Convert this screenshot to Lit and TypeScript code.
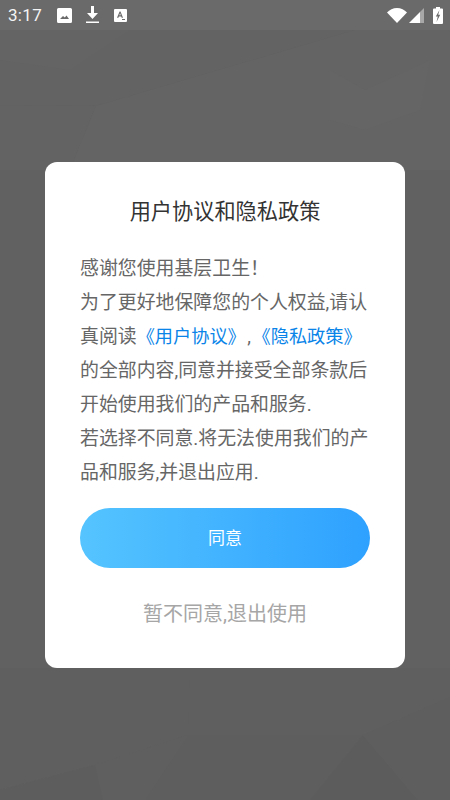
import { LitElement, html, css, svg } from "lit";
import { customElement } from "lit/decorators.js";

const facets = [
  ["M0 105 L96 106 L355 30 L0 30Z", "#636363"],
  ["M0 30 L130 30 L70 70 L0 60Z", "#646464"],
  ["M96 106 L70 170 L0 170 L0 105Z", "#636363"],
  ["M96 106 L355 30 L450 30 L450 170 L70 170Z", "#646464"],
  ["M330 70 L365 90 L430 60 L420 110 L365 130 L330 120Z", "#656565"],
  ["M0 668 L190 668 L188 735 L95 765 L0 790Z", "#5f5f5f"],
  ["M190 668 L188 735 L363 735 L450 697 L450 668Z", "#5f5f5f"],
  ["M188 735 L145 800 L310 800 L363 735Z", "#5e5e5e"],
  ["M363 735 L310 800 L418 800Z", "#5c5c5c"],
  ["M363 735 L450 697 L450 800 L418 800Z", "#5e5e5e"],
  ["M95 765 L188 735 L145 800 L103 800Z", "#5f5f5f"],
  ["M0 790 L95 765 L103 800 L0 800Z", "#5d5d5d"],
];

@customElement("app-root")
export class AppRoot extends LitElement {
  static styles = css`
    :host {
      display: block;
      width: 450px;
      height: 800px;
      overflow: hidden;
      font-family: Roboto, "Noto Sans CJK SC", sans-serif;
    }
    .screen {
      position: relative;
      width: 450px;
      height: 800px;
      display: flex;
      flex-direction: column;
      background: #616161;
    }
    .facets {
      position: absolute;
      inset: 0;
      width: 450px;
      height: 800px;
    }
    .status {
      position: relative;
      height: 30px;
      flex: none;
      display: flex;
      align-items: center;
      padding: 0 7px 0 8px;
      background: #6a6a6a;
      color: #f4f4f4;
    }
    .time {
      font-size: 17px;
      letter-spacing: 0.3px;
      width: 49px;
    }
    .status svg {
      display: block;
      flex: none;
      fill: #fff;
    }
    .spacer {
      flex: 1;
    }
    .main {
      position: relative;
      flex: 1;
      padding: 132px 45px 0;
    }
    .card {
      height: 506px;
      box-sizing: border-box;
      background: #fff;
      border-radius: 12px;
      padding: 35px 35px 0;
      display: flex;
      flex-direction: column;
      align-items: center;
    }
    .title {
      font-size: 21.2px;
      line-height: 30px;
      color: #333;
      white-space: nowrap;
    }
    .body {
      align-self: stretch;
      margin-top: 25px;
      font-size: 18.9px;
      line-height: 34px;
      color: #666;
      white-space: nowrap;
    }
    .link {
      color: #0a84e8;
      font-size: 18.2px;
    }
    .sep {
      margin: 0 1.5px;
    }
    .agree {
      all: unset;
      box-sizing: border-box;
      margin-top: 18px;
      width: 290px;
      height: 60px;
      flex: none;
      padding-bottom: 3px;
      border-radius: 30px;
      background: linear-gradient(90deg, #55c4ff, #2ea1ff);
      color: #fff;
      font-size: 17px;
      text-align: center;
    }
    .decline {
      margin-top: 31px;
      font-size: 20px;
      line-height: 30px;
      color: #a6a6a6;
      white-space: nowrap;
    }
  `;

  render() {
    return html`
      <div class="screen">
        <svg class="facets" viewBox="0 0 450 800">
          ${facets.map(([d, c]) => svg`<path d=${d} fill=${c}></path>`)}
        </svg>
        <div class="status">
          <span class="time">3:17</span>
          <svg width="15" height="15" viewBox="0 0 15 15">
            <path fill-rule="evenodd" d="M1.500 0h12A1.500 1.500 0 0 1 15 1.500v12a1.500 1.500 0 0 1-1.500 1.500h-12A1.500 1.500 0 0 1 0 13.500v-12A1.500 1.500 0 0 1 1.500 0ZM3 11h9L9.500 7.500 7.800 9.500 6 8Z"></path>
          </svg>
          <svg style="margin-left:14px" width="13" height="18" viewBox="0 0 13 18">
            <path d="M5 0h3v7h4l-5.500 6L1 7h4ZM0 15.500h13V17H0Z"></path>
          </svg>
          <svg style="margin-left:15px" width="13" height="13" viewBox="0 0 13 13">
            <path fill-rule="evenodd" d="M1 0h11a1 1 0 0 1 1 1v11a1 1 0 0 1-1 1H1a1 1 0 0 1-1-1V1a1 1 0 0 1 1-1ZM5.600 2.500 3 8.800h1.400l.5-1.300h2.300l.5 1.300H9L6.500 2.500ZM5.300 6.300l.8-2 .7 2ZM8 10v1h3v-1Z"></path>
          </svg>
          <span class="spacer"></span>
          <svg width="20" height="15" viewBox="0 0 20 15">
            <path d="M0 4.500C2.500 1.800 6 0 10 0s7.500 1.800 10 4.500L10 15Z"></path>
          </svg>
          <svg style="margin-left:2px" width="15" height="15" viewBox="0 0 15 15">
            <path fill="#a8a8a8" d="M15 0v15h-4V4Z"></path>
            <path d="M11 4v11H0Z"></path>
          </svg>
          <svg style="margin-left:9px" width="10" height="17" viewBox="0 0 10 17">
            <path fill-rule="evenodd" d="M3 0h4v1.500h2a1 1 0 0 1 1 1V16a1 1 0 0 1-1 1H1a1 1 0 0 1-1-1V2.500a1 1 0 0 1 1-1h2ZM6.500 3 2.800 9.500h2L3.500 15 7.200 7.800H5.200Z"></path>
          </svg>
        </div>
        <div class="main">
          <div class="card">
            <div class="title">用户协议和隐私政策</div>
            <div class="body">
              <div>感谢您使用基层卫生！</div>
              <div>为了更好地保障您的个人权益,请认</div>
              <div>真阅读<span class="link">《用户协议》</span><span class="sep">,</span><span class="link">《隐私政策》</span></div>
              <div>的全部内容,同意并接受全部条款后</div>
              <div>开始使用我们的产品和服务.</div>
              <div>若选择不同意.将无法使用我们的产</div>
              <div>品和服务,并退出应用.</div>
            </div>
            <button class="agree">同意</button>
            <div class="decline">暂不同意,退出使用</div>
          </div>
        </div>
      </div>
    `;
  }
}
